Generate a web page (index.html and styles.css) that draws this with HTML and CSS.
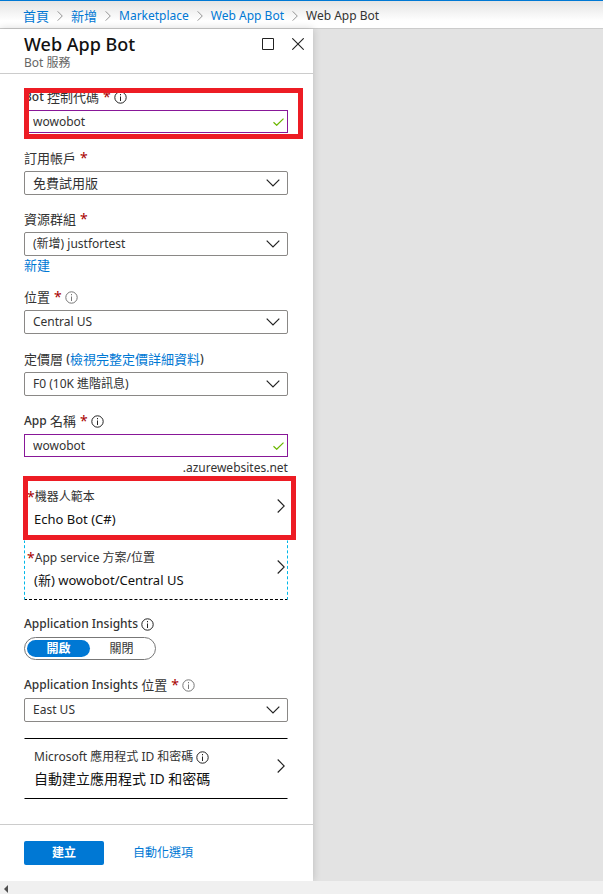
FILE: index.html
```html
<!DOCTYPE html>
<html lang="zh-Hant">
<head>
<meta charset="utf-8">
<meta name="viewport" content="width=device-width, initial-scale=1">
<title>Web App Bot</title>
<link rel="stylesheet" href="styles.css">
</head>
<body>
<svg class="sprite" aria-hidden="true">
  <symbol id="info" viewBox="0 0 13 13"><circle cx="6.5" cy="6.5" r="5.7" fill="none" stroke="currentColor"/><path d="M6 3h1v1.3H6zM6 5.5h1V10H6z" fill="currentColor"/></symbol>
  <symbol id="down" viewBox="0 0 14 8"><path d="M.7.7 7 7 13.300.7" fill="none" stroke="currentColor" stroke-width="1.2"/></symbol>
  <symbol id="right" viewBox="0 0 8 14"><path d="M.7.5 7.200 7 .7 13.500" fill="none" stroke="currentColor" stroke-width="1.1"/></symbol>
  <symbol id="check" viewBox="0 0 11 8"><path d="M.5 4.300 3.700 7.300 10.500.6" fill="none" stroke="currentColor" stroke-width="1.2"/></symbol>
</svg>

<nav class="crumbs" aria-label="導覽路徑">
  <a class="cjk" href="#">首頁</a>
  <svg class="crumb-sep"><use href="#right"/></svg>
  <a class="cjk" href="#">新增</a>
  <svg class="crumb-sep"><use href="#right"/></svg>
  <a href="#">Marketplace</a>
  <svg class="crumb-sep"><use href="#right"/></svg>
  <a href="#">Web App Bot</a>
  <svg class="crumb-sep"><use href="#right"/></svg>
  <span>Web App Bot</span>
</nav>

<main class="workspace">
  <section class="blade">
    <header class="blade-head">
      <div class="blade-title">
        <h1>Web App Bot</h1>
        <p>Bot 服務</p>
      </div>
      <button class="icon-button" type="button" aria-label="最大化"><svg width="12" height="12" viewBox="0 0 12 12"><path d="M.5.5h11v11H.5z" fill="none" stroke="currentColor"/></svg></button>
      <button class="icon-button" type="button" aria-label="關閉"><svg width="12" height="12" viewBox="0 0 12 12"><path d="M.3.3l11.400 11.400M11.700.3.3 11.700" fill="none" stroke="currentColor" stroke-width="1.1"/></svg></button>
    </header>

    <form class="blade-form" id="bot-form">
      <div class="field marked">
        <label for="handle">Bot <span class="cjk">控制代碼</span><b class="req">*</b><svg class="info"><use href="#info"/></svg></label>
        <div class="control">
          <input id="handle" type="text" value="wowobot">
          <svg class="check"><use href="#check"/></svg>
        </div>
        <i class="mark mark-field"></i>
      </div>
      <div class="field">
        <label for="sub"><span class="cjk">訂用帳戶</span><b class="req">*</b></label>
        <div class="control">
          <select class="cjk" id="sub"><option>免費試用版</option></select>
          <svg class="down"><use href="#down"/></svg>
        </div>
      </div>
      <div class="field">
        <label for="group"><span class="cjk">資源群組</span><b class="req">*</b></label>
        <div class="control">
          <select id="group"><option>(新增) justfortest</option></select>
          <svg class="down"><use href="#down"/></svg>
        </div>
        <a class="new-link cjk" href="#">新建</a>
      </div>
      <div class="field field-roomy">
        <label for="loc"><span class="cjk">位置</span><b class="req">*</b><svg class="info info-muted"><use href="#info"/></svg></label>
        <div class="control">
          <select id="loc"><option>Central US</option></select>
          <svg class="down"><use href="#down"/></svg>
        </div>
      </div>
      <div class="field field-roomy">
        <div class="label-row"><label class="cjk" for="tier">定價層</label>&nbsp;(<a class="cjk" href="#">檢視完整定價詳細資料</a>)</div>
        <div class="control">
          <select id="tier"><option>F0 (10K 進階訊息)</option></select>
          <svg class="down"><use href="#down"/></svg>
        </div>
      </div>
      <div class="field field-name">
        <label for="app">App <span class="cjk">名稱</span><b class="req">*</b><svg class="info"><use href="#info"/></svg></label>
        <div class="control">
          <input id="app" type="text" value="wowobot">
          <svg class="check"><use href="#check"/></svg>
        </div>
        <span class="suffix">.azurewebsites.net</span>
      </div>

      <div class="marked">
        <button class="picker" type="button">
          <span class="picker-text">
            <span class="picker-label required"><b class="req">*</b>機器人範本</span>
            <span class="picker-value">Echo Bot (C#)</span>
          </span>
          <svg class="right"><use href="#right"/></svg>
        </button>
        <i class="mark mark-picker"></i>
      </div>
      <button class="picker picker-focus" type="button">
        <span class="picker-text">
          <span class="picker-label required"><b class="req">*</b>App service 方案/位置</span>
          <span class="picker-value">(新) wowobot/Central US</span>
        </span>
        <svg class="right"><use href="#right"/></svg>
      </button>

      <fieldset class="field field-roomy">
        <legend>Application Insights<svg class="info"><use href="#info"/></svg></legend>
        <div class="toggle">
          <label><input type="radio" name="insights" checked><span>開啟</span></label>
          <label><input type="radio" name="insights"><span>關閉</span></label>
        </div>
      </fieldset>
      <div class="field">
        <label for="ai-loc">Application Insights <span class="cjk">位置</span><b class="req">*</b><svg class="info info-muted"><use href="#info"/></svg></label>
        <div class="control">
          <select id="ai-loc"><option>East US</option></select>
          <svg class="down"><use href="#down"/></svg>
        </div>
      </div>

      <button class="picker picker-lined" type="button">
        <span class="picker-text">
          <span class="picker-label">Microsoft 應用程式 ID 和密碼<svg class="info"><use href="#info"/></svg></span>
          <span class="picker-value picker-value-cjk">自動建立應用程式 ID 和密碼</span>
        </span>
        <svg class="right"><use href="#right"/></svg>
      </button>
    </form>

    <footer class="blade-foot">
      <button class="create" type="submit" form="bot-form">建立</button>
      <a href="#">自動化選項</a>
    </footer>
  </section>
</main>

<div class="scroll-track"><svg width="4" height="8" viewBox="0 0 4 8"><path d="M4 0v8L0 4z" fill="#505050"/></svg></div>
</body>
</html>
```

FILE: styles.css
```css
* { box-sizing: border-box; }

body {
  margin: 0;
  min-height: 100vh;
  display: flex;
  flex-direction: column;
  background: #e3e3e3;
  color: #333;
  font: 12px/20px "Noto Sans", "Noto Sans CJK TC", sans-serif;
}

a { color: #0078d4; text-decoration: none; }
button, input, select { font: inherit; color: inherit; margin: 0; }
button { cursor: pointer; }
svg { flex: none; }
.cjk { font-size: 13px; }
.sprite { position: absolute; width: 0; height: 0; }

.crumbs {
  display: flex;
  align-items: center;
  height: 29px;
  padding: 2px 23px 0;
  border-top: 1px solid #0078d4;
  border-bottom: 1px solid #ccc;
  background: linear-gradient(#e4e4e4, #fff 20px);
  white-space: nowrap;
}
.crumb-sep { width: 6px; height: 10px; margin: 0 8px; color: #777; }

.workspace { flex: 1; display: flex; }
.blade {
  display: flex;
  flex-direction: column;
  width: 51.9%;
  background: #fff;
  box-shadow: 0 0 8px rgba(0, 0, 0, .18);
}

.blade-head {
  display: flex;
  align-items: flex-start;
  gap: 18px;
  padding: 5px 9px 2px 24px;
  border-bottom: 1px solid #ccc;
}
.blade-title { flex: 1; }
.blade-title h1 { margin: 0; font-size: 18px; line-height: 21px; font-weight: 500; color: #111; }
.blade-title p { margin: 0; line-height: 16px; color: #666; }
.icon-button { display: flex; margin-top: 4px; padding: 0; border: 0; background: none; color: #222; }

.blade-form { flex: 1; padding: 13px 25px 24px 24px; }
.field { margin: 0 0 14px; padding: 0; border: 0; min-width: 0; }
.field-roomy { margin-bottom: 15px; }
.field-name { margin-bottom: 1px; }
.field > label, .label-row, legend {
  display: flex;
  align-items: center;
  height: 20px;
  margin-bottom: 3px;
  padding: 0;
  white-space: pre;
  font-weight: 500;
}
.field .cjk { font-weight: 400; }
.req { color: #a80000; font-weight: 400; font-size: 14px; }
.field .req { margin-left: 4px; }
.info { width: 13px; height: 13px; margin-left: 3px; color: #222; }
.info-muted { color: #777; }

.control { position: relative; min-height: 24px; }
.control input, .control select {
  display: block;
  width: 100%;
  height: 24px;
  padding: 0 30px 0 8px;
  border: 1px solid #8a8886;
  border-radius: 2px;
  background: #fff;
  appearance: none;
}
.control input { height: 23px; border-color: #881798; border-radius: 0; }
.down { position: absolute; right: 8px; top: 8px; width: 14px; height: 8px; color: #222; pointer-events: none; }
.check { position: absolute; right: 4px; top: 8px; width: 11px; height: 8px; color: #6bb700; }
.new-link { display: block; height: 17px; line-height: 18px; }
.suffix { display: block; text-align: right; }

.marked { position: relative; }
.mark { position: absolute; border: 5px solid #ed1c24; pointer-events: none; }
.mark-field { inset: 1px -15px -5px 0; }
.mark-picker { inset: -3px -8px 0 -1px; }

.picker {
  display: flex;
  align-items: center;
  justify-content: space-between;
  width: 100%;
  height: 61px;
  padding: 0 2px 3px 9px;
  border: 1px solid transparent;
  background: none;
  text-align: left;
}
.picker-focus { height: 60px; border: 1px dashed #00b7e8; border-top-color: transparent; border-bottom-color: #000; margin-bottom: 14px; }
.picker-lined { border-color: #000 transparent; margin-top: 16px; padding-bottom: 1px; }
.picker-text { display: flex; flex-direction: column; gap: 2px; white-space: nowrap; }
.picker-label { display: flex; align-items: center; height: 20px; }
.required { margin-left: -7px; }
.picker-value { font-size: 13px; color: #111; }
.picker-value-cjk { font-size: 14px; }
.right { width: 8px; height: 14px; margin-bottom: 4px; color: #222; }

.toggle {
  display: flex;
  width: 132px;
  height: 23px;
  padding: 2px;
  border: 1px solid #777;
  border-radius: 12px;
}
.toggle label { flex: 1; display: flex; }
.toggle input { position: absolute; opacity: 0; }
.toggle span { flex: 1; text-align: center; line-height: 17px; border-radius: 9px; }
.toggle input:checked + span { background: #0078d4; color: #fff; font-weight: 600; }

.blade-foot {
  display: flex;
  align-items: center;
  gap: 29px;
  height: 57px;
  padding: 0 24px;
  border-top: 1px solid #ccc;
}
.create { width: 80px; height: 24px; padding: 0; border: 0; border-radius: 2px; background: #0078d4; color: #fff; font-weight: 600; }

.scroll-track { display: flex; align-items: center; height: 13px; padding: 3px 4px 0; background: #f0f0f0; }
```
